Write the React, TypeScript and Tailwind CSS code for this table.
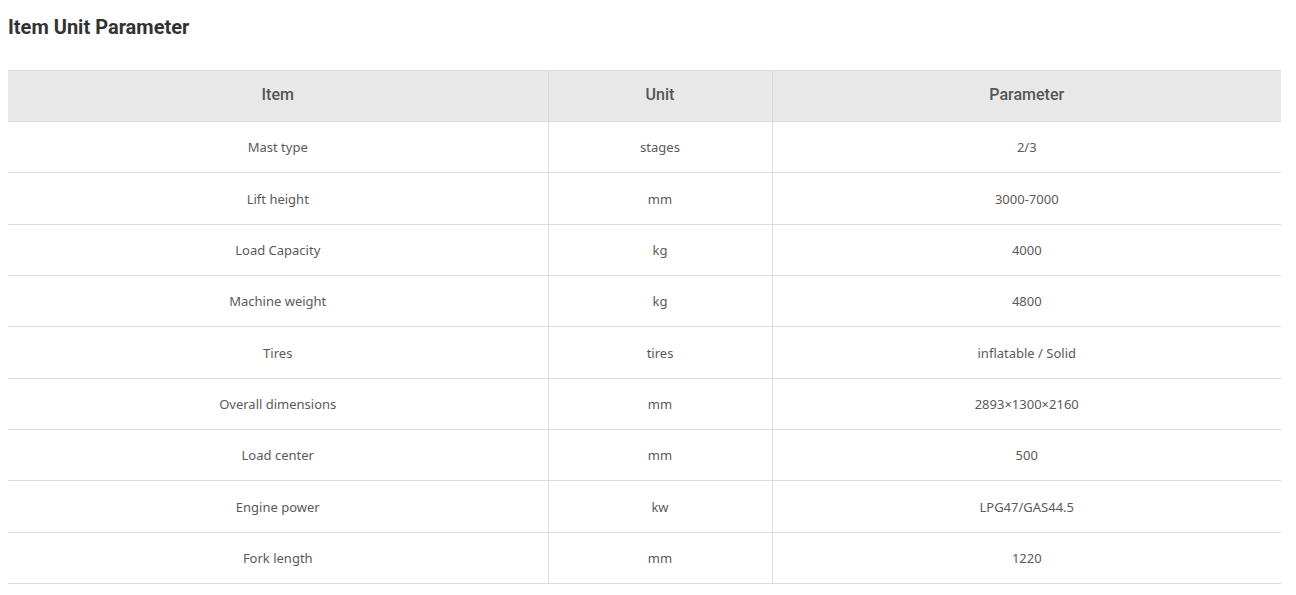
const rows = [
  ["Mast type", "stages", "2/3"],
  ["Lift height", "mm", "3000-7000"],
  ["Load Capacity", "kg", "4000"],
  ["Machine weight", "kg", "4800"],
  ["Tires", "tires", "inflatable / Solid"],
  ["Overall dimensions", "mm", "2893×1300×2160"],
  ["Load center", "mm", "500"],
  ["Engine power", "kw", "LPG47/GAS44.5"],
  ["Fork length", "mm", "1220"],
];

export default function App() {
  return (
    <div className="bg-white min-h-[595px] px-2 pt-[14px] font-['Roboto',sans-serif]">
      <h2 className="text-[20px] leading-[26px] font-bold text-[#333]">Item Unit Parameter</h2>

      <table className="mt-[30px] w-[1273px] border-collapse text-center">
        <thead>
          <tr className="bg-[#e8e8e8] h-[51px] border-t border-b border-[#dcdcdc]">
            <th className="w-[540px] pb-[3px] text-[16px] font-medium text-[#555]">Item</th>
            <th className="w-[224px] pb-[3px] text-[16px] font-medium text-[#555] border-l border-[#dcdcdc]">
              Unit
            </th>
            <th className="pb-[3px] text-[16px] font-medium text-[#555] border-l border-[#dcdcdc]">
              Parameter
            </th>
          </tr>
        </thead>
        <tbody className="font-['Noto_Sans',sans-serif] text-[13px] text-[#5a5a5a]">
          {rows.map((r) => (
            <tr key={r[0]} className="h-[51.33px] border-b border-[#dcdcdc]">
              <td className="pt-[2px]">{r[0]}</td>
              <td className="pt-[2px] border-l border-[#dcdcdc]">{r[1]}</td>
              <td className="pt-[2px] border-l border-[#dcdcdc]">{r[2]}</td>
            </tr>
          ))}
        </tbody>
      </table>
    </div>
  );
}
